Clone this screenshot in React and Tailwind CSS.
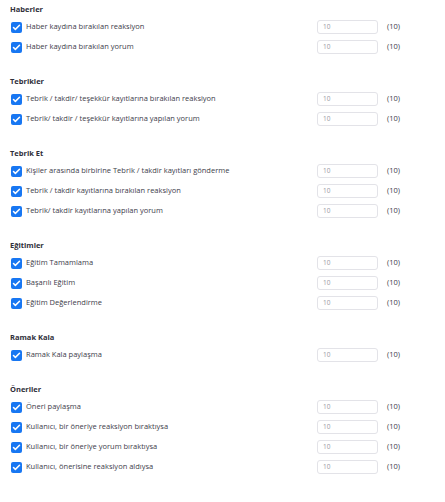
import { Check } from 'lucide-react';

const sections = [
  { title: 'Haberler', items: ['Haber kaydına bırakılan reaksiyon', 'Haber kaydına bırakılan yorum'] },
  {
    title: 'Tebrikler',
    items: ['Tebrik / takdir/ teşekkür kayıtlarına bırakılan reaksiyon', 'Tebrik/ takdir / teşekkür kayıtlarına yapılan yorum'],
  },
  {
    title: 'Tebrik Et',
    items: [
      'Kişiler arasında birbirine Tebrik / takdir kayıtları gönderme',
      'Tebrik / takdir kayıtlarına bırakılan reaksiyon',
      'Tebrik/ takdir kayıtlarına yapılan yorum',
    ],
  },
  { title: 'Eğitimler', items: ['Eğitim Tamamlama', 'Başarılı Eğitim', 'Eğitim Değerlendirme'] },
  { title: 'Ramak Kala', items: ['Ramak Kala paylaşma'] },
  {
    title: 'Öneriler',
    items: [
      'Öneri paylaşma',
      'Kullanıcı, bir öneriye reaksiyon bıraktıysa',
      'Kullanıcı, bir öneriye yorum bıraktıysa',
      'Kullanıcı, önerisine reaksiyon aldıysa',
    ],
  },
];

function Row({ label }) {
  return (
    <div className="flex items-center h-[20px]">
      <div className="w-[307px] flex items-center gap-[4px] pl-px">
        <span className="w-[11px] h-[11px] rounded-[2px] bg-[#1877f2] flex items-center justify-center shrink-0">
          <Check className="w-[9px] h-[9px] text-white" strokeWidth={4} />
        </span>
        <span className="text-[7.5px] text-[#3d3d4a] whitespace-nowrap">{label}</span>
      </div>
      <div className="w-[61px] h-[14px] border border-[#e3e3e8] rounded-[3px] flex items-center pl-[5px] text-[6.5px] text-[#9a9aa4]">
        10
      </div>
      <span className="ml-[9px] text-[7.5px] text-[#3d3d4a]">(10)</span>
    </div>
  );
}

export default function App() {
  return (
    <div
      className="w-[445px] h-[502px] bg-white px-[10px] pt-[4px] flex flex-col gap-[19px] overflow-hidden"
      style={{ fontFamily: '"Open Sans", sans-serif' }}
    >
      {sections.map((s) => (
        <div key={s.title}>
          <div className="h-[12px] mb-px flex items-center text-[7.5px] font-bold text-[#2f2f3a]">{s.title}</div>
          {s.items.map((item) => (
            <Row key={item} label={item} />
          ))}
        </div>
      ))}
    </div>
  );
}
